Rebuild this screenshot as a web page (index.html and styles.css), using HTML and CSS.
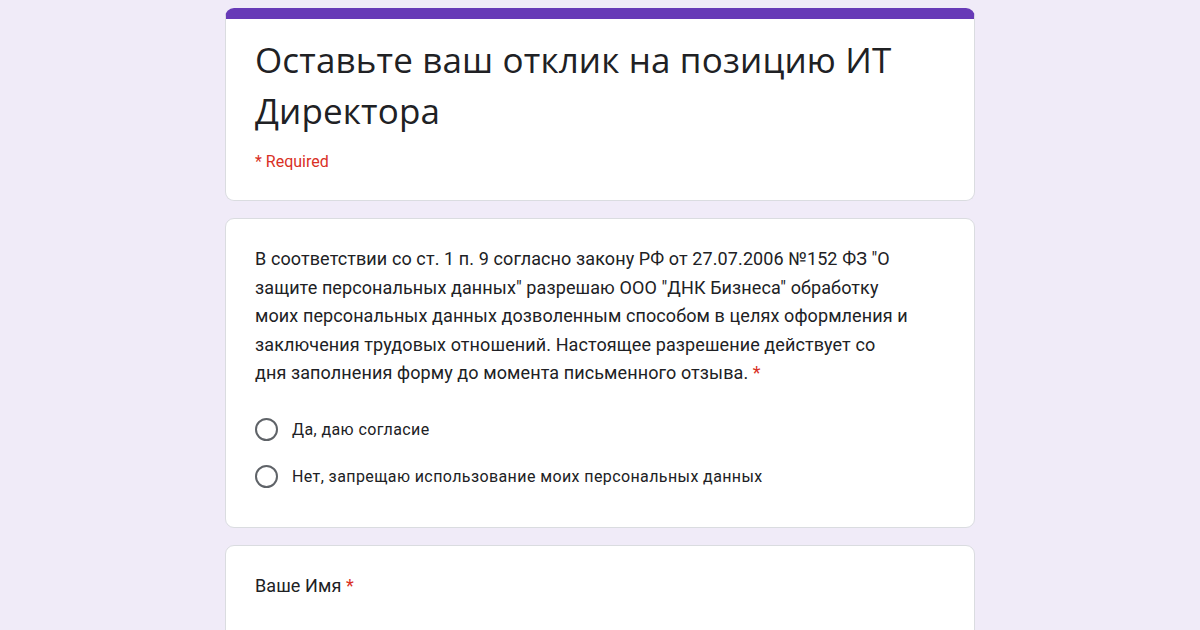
FILE: index.html
```html
<!DOCTYPE html>
<html lang="ru">
<head>
<meta charset="utf-8">
<title>Оставьте ваш отклик на позицию ИТ Директора</title>
<link rel="stylesheet" href="styles.css">
</head>
<body>
<main class="form">
  <section class="card card-head">
    <h1 class="title">Оставьте ваш отклик на позицию ИТ<br>Директора</h1>
    <div class="required-note">* Required</div>
  </section>

  <section class="card card-question">
    <div class="question">В соответствии со ст. 1 п. 9 согласно закону РФ от 27.07.2006 №152 ФЗ "О<br>защите персональных данных" разрешаю ООО "ДНК Бизнеса" обработку<br>моих персональных данных дозволенным способом в целях оформления и<br>заключения трудовых отношений. Настоящее разрешение действует со<br>дня заполнения форму до момента письменного отзыва. <span class="star">*</span></div>
    <div class="options">
      <div class="option"><span class="radio"></span><span class="opt-label">Да, даю согласие</span></div>
      <div class="option"><span class="radio"></span><span class="opt-label">Нет, запрещаю использование моих персональных данных</span></div>
    </div>
  </section>

  <section class="card card-last">
    <div class="question">Ваше Имя <span class="star">*</span></div>
  </section>
</main>
</body>
</html>
```

FILE: styles.css
```css
html, body {
  margin: 0;
  padding: 0;
  background: #f0ebf8;
  height: 630px;
  overflow: hidden;
}

.form {
  width: 750px;
  margin: 8px auto 0;
  display: flex;
  flex-direction: column;
  gap: 17px;
  font-family: Roboto, "Liberation Sans", Arial, sans-serif;
  color: #202124;
}

.card {
  background: #fff;
  border: 1px solid #dadce0;
  border-radius: 9px;
  padding: 26px 29px 24px;
  box-sizing: border-box;
}

.card-head {
  border-top: 11px solid #673ab7;
  padding-top: 15px;
  padding-bottom: 22px;
  height: 193px;
}

.title {
  margin: 0;
  font-family: "Open Sans", Roboto, sans-serif;
  font-weight: 400;
  font-size: 35px;
  line-height: 51px;
  color: #202124;
  letter-spacing: 0.15px;
}

.required-note {
  margin-top: 16px;
  font-size: 16px;
  line-height: 20px;
  color: #d93025;
}

.card-question {
  padding-bottom: 39px;
}

.question {
  font-size: 18px;
  line-height: 28.5px;
  white-space: nowrap;
  letter-spacing: 0.1px;
}

.star {
  color: #d93025;
}

.options {
  margin-top: 30px;
  display: flex;
  flex-direction: column;
  gap: 24px;
}

.option {
  display: flex;
  align-items: center;
  gap: 14px;
  height: 23px;
}

.radio {
  width: 23px;
  height: 23px;
  border: 2.3px solid #5f6368;
  border-radius: 50%;
  box-sizing: border-box;
  flex: none;
}

.opt-label {
  font-size: 16px;
  line-height: 23px;
  letter-spacing: 0.4px;
}

.card-last {
  height: 120px;
}
```
